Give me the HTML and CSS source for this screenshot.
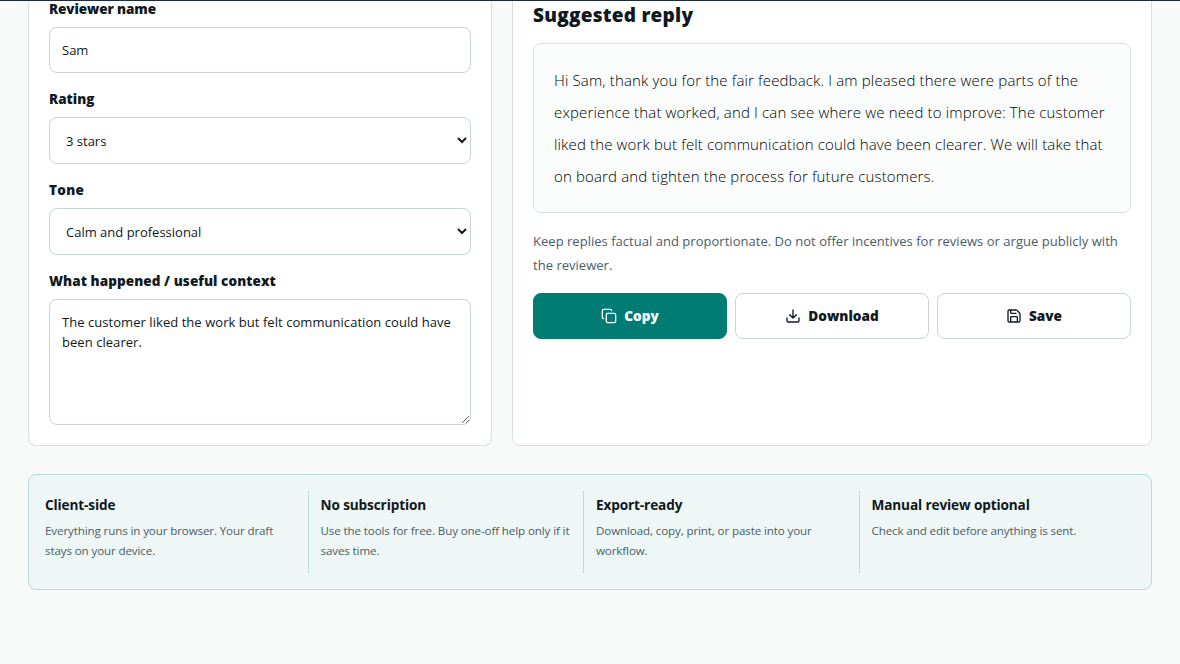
FILE: index.html
```html
<!DOCTYPE html>
<html lang="en">
<head>
    <meta charset="UTF-8">
    <meta name="viewport" content="width=device-width, initial-scale=1.0">
    <title>Review Reply Tool</title>
    <link rel="stylesheet" href="styles.css">
</head>
<body>
    <div class="topline"></div>
    <main class="page">
        <div class="workspace">
            <form class="panel form">
                <div class="field">
                    <label for="name" class="name">Reviewer name</label>
                    <input type="text" id="name" value="Sam">
                </div>
                <div class="field">
                    <label for="rating">Rating</label>
                    <select id="rating">
                        <option>3 stars</option>
                    </select>
                </div>
                <div class="field">
                    <label for="tone" class="tone">Tone</label>
                    <select id="tone">
                        <option>Calm and professional</option>
                    </select>
                </div>
                <div class="field">
                    <label for="context" class="context">What happened / useful context</label>
                    <textarea id="context">The customer liked the work but felt communication could have been clearer.</textarea>
                </div>
            </form>

            <section class="panel output">
                <h2>Suggested reply</h2>
                <div class="reply">Hi Sam, thank you for the fair feedback. I am pleased there were parts of the<br>experience that worked, and I can see where we need to improve: The customer<br>liked the work but felt communication could have been clearer. We will take that<br>on board and tighten the process for future customers.</div>
                <p class="note">Keep replies factual and proportionate. Do not offer incentives for reviews or argue publicly with<br>the reviewer.</p>
                <div class="actions">
                    <button type="button" class="btn primary">
                        <svg width="16" height="16" viewBox="0 0 24 24"><rect x="8" y="8" width="14" height="14" rx="2"/><path d="M4 16c-1.1 0-2-.9-2-2V4c0-1.1.9-2 2-2h10c1.1 0 2 .9 2 2"/></svg>
                        <span>Copy</span>
                    </button>
                    <button type="button" class="btn">
                        <svg width="16" height="16" viewBox="0 0 24 24"><path d="M21 15v4a2 2 0 0 1-2 2H5a2 2 0 0 1-2-2v-4M7 10l5 5 5-5M12 15V3"/></svg>
                        <span>Download</span>
                    </button>
                    <button type="button" class="btn">
                        <svg width="16" height="16" viewBox="0 0 24 24"><path d="M15.2 3a2 2 0 0 1 1.4.6l3.8 3.8a2 2 0 0 1 .6 1.4V19a2 2 0 0 1-2 2H5a2 2 0 0 1-2-2V5a2 2 0 0 1 2-2zM17 21v-7a1 1 0 0 0-1-1H8a1 1 0 0 0-1 1v7M7 3v4a1 1 0 0 0 1 1h7"/></svg>
                        <span>Save</span>
                    </button>
                </div>
            </section>
        </div>

        <section class="strip">
            <div class="item">
                <strong>Client-side</strong>
                <p>Everything runs in your browser. Your draft<br>stays on your device.</p>
            </div>
            <div class="item">
                <strong>No subscription</strong>
                <p>Use the tools for free. Buy one-off help only if it<br>saves time.</p>
            </div>
            <div class="item">
                <strong>Export-ready</strong>
                <p>Download, copy, print, or paste into your<br>workflow.</p>
            </div>
            <div class="item">
                <strong>Manual review optional</strong>
                <p>Check and edit before anything is sent.</p>
            </div>
        </section>
    </main>
</body>
</html>
```
FILE: styles.css
```css
* {
    box-sizing: border-box;
}
body {
    margin: 0;
    height: 664px;
    overflow: hidden;
    background: #f8faf9;
    color: #101820;
    font-family: "Open Sans", "Noto Sans", sans-serif;
    font-size: 14px;
}
.topline {
    height: 1px;
    background: #1d2b3f;
}
.page {
    padding: 0 28px;
}
.workspace {
    display: grid;
    grid-template-columns: 464px 640px;
    gap: 20px;
    height: 445px;
}
.panel {
    background: #fff;
    border: 1px solid #d7e2df;
    border-top: 0;
    border-radius: 0 0 8px 8px;
    padding: 0 20px 20px;
}
.field {
    display: grid;
    gap: 8px;
    margin-bottom: 16px;
}
.form .field:first-child {
    margin-top: -2px;
}
.form .field:last-child {
    margin-bottom: 0;
}
.field label {
    font-size: 13.5px;
    font-weight: 800;
    line-height: 20px;
}
.field .name {
    letter-spacing: -0.1px;
}
.field .tone {
    letter-spacing: 0.3px;
}
.field .context {
    letter-spacing: 0.08px;
}
input, select, textarea {
    display: block;
    width: 100%;
    height: 46px;
    border: 1px solid #c8d6d3;
    border-radius: 8px;
    background: #fff;
    color: #101820;
    font: inherit;
    font-size: 13px;
    padding: 0 12px;
}
select {
    height: 47px;
}
textarea {
    height: 126px;
    padding: 12px;
    line-height: 20px;
    letter-spacing: 0.05px;
    resize: vertical;
}
h2 {
    margin: 0 0 14px;
    font-size: 19px;
    font-weight: 800;
    line-height: 28px;
    letter-spacing: 0.25px;
}
.reply {
    height: 170px;
    padding: 20px;
    border: 1px solid #d7e2df;
    border-radius: 8px;
    background: #fbfdfc;
    color: #000;
    font-size: 15px;
    font-weight: 300;
    line-height: 32px;
    letter-spacing: 0.15px;
    white-space: nowrap;
}
.note {
    margin: 16px 0;
    color: #4a5d68;
    font-size: 13px;
    line-height: 24px;
    letter-spacing: 0.025px;
    white-space: nowrap;
}
.actions {
    display: grid;
    grid-template-columns: repeat(3, 1fr);
    gap: 8px;
}
.btn {
    display: flex;
    align-items: center;
    justify-content: center;
    gap: 7px;
    height: 46px;
    padding: 0 6px;
    border: 1px solid #c8d6d3;
    border-radius: 8px;
    background: #fff;
    color: #101820;
    font: inherit;
    font-size: 13.6px;
    font-weight: 800;
    line-height: 18px;
}
.btn.primary {
    border-color: #007c75;
    background: #007c75;
    color: #fff;
}
.btn svg {
    fill: none;
    stroke: currentColor;
    stroke-width: 2;
    stroke-linecap: round;
    stroke-linejoin: round;
}
.strip {
    display: grid;
    grid-template-columns: repeat(4, 1fr);
    gap: 12px;
    margin-top: 28px;
    height: 116px;
    padding: 16px;
    border: 1px solid #b6dcd5;
    border-radius: 8px;
    background: #eef7f6;
}
.item {
    min-width: 0;
    padding-top: 4px;
    border-right: 1px solid #b6dcd5;
}
.item:last-child {
    border-right: 0;
}
.item strong {
    display: block;
    margin-bottom: 6px;
    font-size: 13.6px;
    line-height: 20px;
    letter-spacing: -0.12px;
}
.item p {
    margin: 0;
    color: #4a5d68;
    font-size: 11.6px;
    line-height: 20px;
    letter-spacing: -0.12px;
    white-space: nowrap;
}
```
